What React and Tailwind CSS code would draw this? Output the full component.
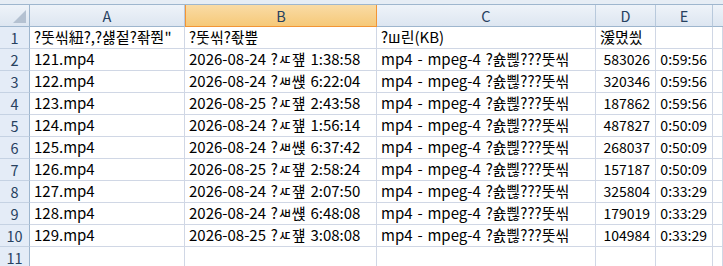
import React from "react";

const rows = [
  ["121.mp4", "2026-08-24 ?ㅼ쟾 1:38:58", "583026", "0:59:56"],
  ["122.mp4", "2026-08-24 ?ㅽ썑 6:22:04", "320346", "0:59:56"],
  ["123.mp4", "2026-08-25 ?ㅼ쟾 2:43:58", "187862", "0:59:56"],
  ["124.mp4", "2026-08-24 ?ㅼ쟾 1:56:14", "487827", "0:50:09"],
  ["125.mp4", "2026-08-24 ?ㅽ썑 6:37:42", "268037", "0:50:09"],
  ["126.mp4", "2026-08-25 ?ㅼ쟾 2:58:24", "157187", "0:50:09"],
  ["127.mp4", "2026-08-24 ?ㅼ쟾 2:07:50", "325804", "0:33:29"],
  ["128.mp4", "2026-08-24 ?ㅽ썑 6:48:08", "179019", "0:33:29"],
  ["129.mp4", "2026-08-25 ?ㅼ쟾 3:08:08", "104984", "0:33:29"],
];

const TYPE = "mp4 - mpeg-4 ?숈쁺???뚯씪";

const font = { fontFamily: '"Noto Sans CJK KR", "Noto Sans", sans-serif' };

function ColHead({ label, active, last }) {
  return (
    <div
      className={
        "h-[22px] flex items-center justify-center text-[14.5px] text-[#27415f] border-b " +
        (active
          ? "bg-gradient-to-b from-[#f9dba5] to-[#f6c978] border-b-[#f29536] border-l border-l-[#f29536] border-r border-r-[#f29536]"
          : "bg-gradient-to-b from-[#eef3f9] to-[#dde6f1] border-b-[#9eb6ce] border-r border-r-[#b8c9dc]") +
        (last ? " border-r-0" : "")
      }
    >
      {label}
    </div>
  );
}

function RowHead({ n }) {
  return (
    <div className="h-[22px] flex items-center justify-center text-[14.5px] text-[#27415f] bg-[#e4ecf7] border-b border-b-[#c5d2e3] border-r border-r-[#9eb6ce]">
      {n}
    </div>
  );
}

function Cell({ children, right }) {
  return (
    <div
      className={
        "h-[22px] flex items-center text-black bg-white border-b border-r border-[#d0d7e5] whitespace-nowrap overflow-hidden " +
        (right
          ? "justify-end pl-[2px] pr-[5px] text-[14px]"
          : "px-[4px] text-[15px] [word-spacing:1.5px]")
      }
    >
      {children}
    </div>
  );
}

export default function App() {
  return (
    <div className="w-[723px] h-[266px] overflow-hidden bg-white" style={font}>
      <div className="h-[4px] bg-[#e6edf5] border-b border-[#9eb6ce] box-content" />
      <div className="grid grid-cols-[30px_155px_192px_219px_60px_57px_1fr]">
        <div className="h-[22px] relative bg-gradient-to-b from-[#eef3f9] to-[#dde6f1] border-b border-b-[#9eb6ce] border-r border-r-[#9eb6ce]">
          <div className="absolute right-[3px] bottom-[3px] w-0 h-0 border-l-[13px] border-l-transparent border-b-[13px] border-b-[#b4c1d1]" />
        </div>
        <ColHead label="A" />
        <ColHead label="B" active />
        <ColHead label="C" />
        <ColHead label="D" />
        <ColHead label="E" />
        <ColHead label="" last />

        <RowHead n={1} />
        <Cell>?뚯씪紐?,?섏젙?좎쭨"</Cell>
        <Cell>?뚯씪?좏쁲</Cell>
        <Cell>?ш린(KB)</Cell>
        <Cell>湲몄씠</Cell>
        <Cell />
        <Cell />

        {rows.map((r, i) => (
          <React.Fragment key={i}>
            <RowHead n={i + 2} />
            <Cell>{r[0]}</Cell>
            <Cell>{r[1]}</Cell>
            <Cell>{TYPE}</Cell>
            <Cell right>{r[2]}</Cell>
            <Cell right>{r[3]}</Cell>
            <Cell />
          </React.Fragment>
        ))}

        <RowHead n={11} />
        <Cell />
        <Cell />
        <Cell />
        <Cell />
        <Cell />
        <Cell />
      </div>
    </div>
  );
}
